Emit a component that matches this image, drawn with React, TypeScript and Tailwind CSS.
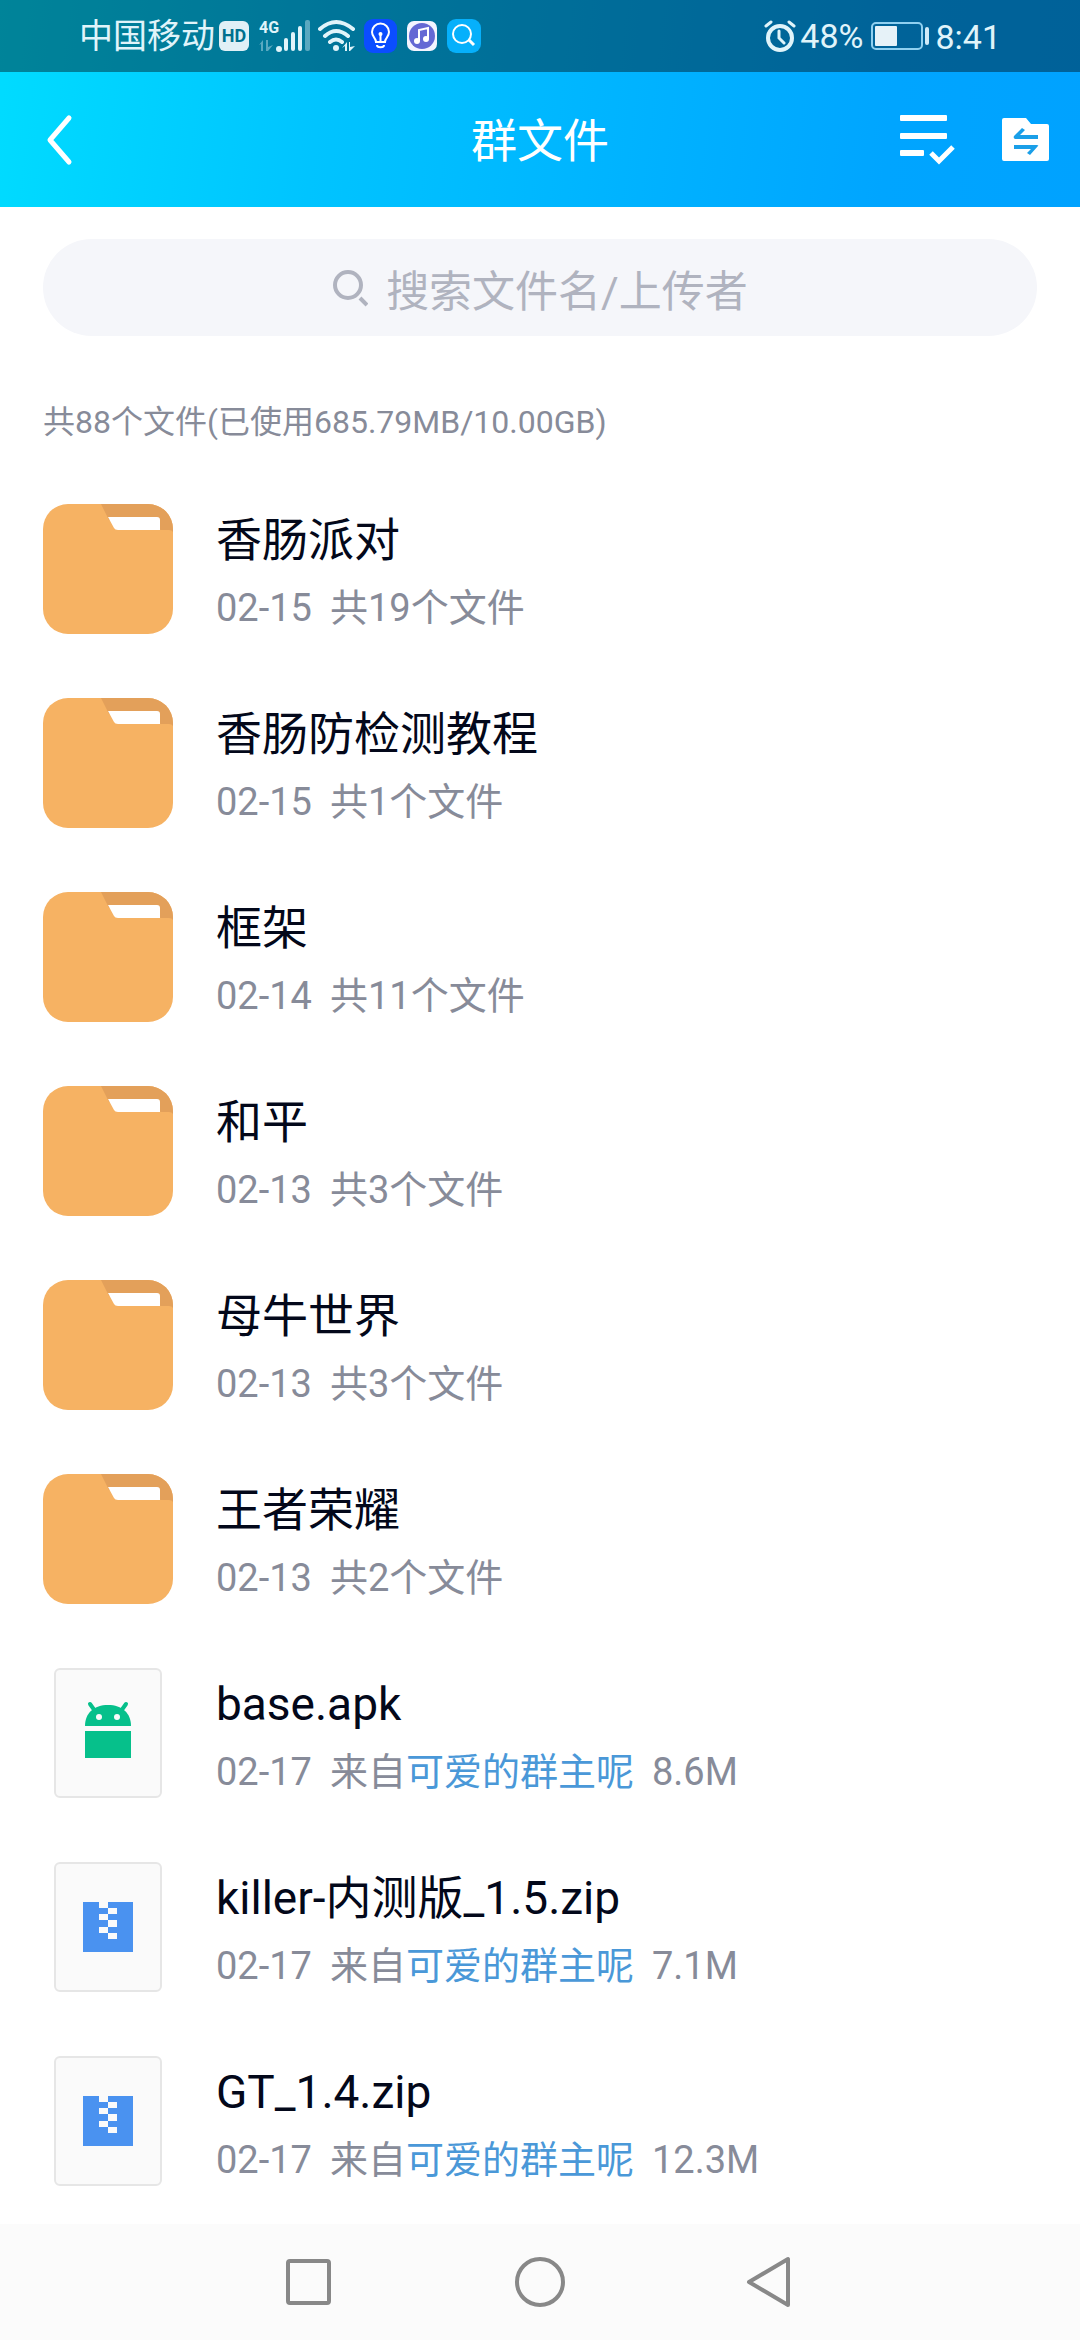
import type { ReactNode } from "react";

type Folder = { name: string; date: string; count: number };
type GroupFile = { name: string; date: string; owner: string; size: string; kind: "apk" | "zip" };

const folders: Folder[] = [
  { name: "香肠派对", date: "02-15", count: 19 },
  { name: "香肠防检测教程", date: "02-15", count: 1 },
  { name: "框架", date: "02-14", count: 11 },
  { name: "和平", date: "02-13", count: 3 },
  { name: "母牛世界", date: "02-13", count: 3 },
  { name: "王者荣耀", date: "02-13", count: 2 },
];

const files: GroupFile[] = [
  { name: "base.apk", date: "02-17", owner: "可爱的群主呢", size: "8.6M", kind: "apk" },
  { name: "killer-内测版_1.5.zip", date: "02-17", owner: "可爱的群主呢", size: "7.1M", kind: "zip" },
  { name: "GT_1.4.zip", date: "02-17", owner: "可爱的群主呢", size: "12.3M", kind: "zip" },
];

function SignalIcon() {
  return (
    <svg width="52" height="34" viewBox="0 0 52 34" fill="#e0f4fa" aria-hidden="true">
      <text x="0" y="14" fontSize="16" fontWeight="700">4G</text>
      <g opacity="0.4">
        <path d="M4 21v11H2v-7L0 26zM7 21h2v7l5-2-5 6H7z" />
        <rect x="46" y="1" width="5" height="31" rx="2" />
      </g>
      <circle cx="20" cy="30" r="3" />
      <rect x="25" y="19" width="4" height="13" rx="2" />
      <rect x="32" y="13" width="4" height="19" rx="2" />
      <rect x="39" y="7" width="4" height="25" rx="2" />
    </svg>
  );
}

function WifiIcon() {
  return (
    <svg width="38" height="34" viewBox="0 0 38 34" fill="none" stroke="#e0f4fa" strokeWidth="4" aria-hidden="true">
      <path d="M2 10Q18-4 35 10M7 17q11-10 23 0M12 23q6-5 12 0" strokeLinecap="round" />
      <circle cx="18" cy="29" r="3" fill="#e0f4fa" stroke="none" />
      <path d="M29 23v9h-2v-5l-3 2zM32 23v5l5-1-5 5h-1v-9z" fill="#e0f4fa" stroke="none" />
    </svg>
  );
}

function BulbIcon() {
  return (
    <svg width="33" height="34" viewBox="0 0 33 34" fill="none" stroke="#fff" strokeWidth="2" aria-hidden="true">
      <rect width="33" height="34" rx="9" fill="#0b4dff" stroke="none" />
      <path d="M12 23c0-4-4-5-4-10a8 8 0 0 1 17 0c0 5-4 6-4 10zM13 26c0 3 7 3 7 0M16.500 16v7" />
      <circle cx="16.500" cy="15" r="2" fill="#fff" stroke="none" />
    </svg>
  );
}

function MusicIcon() {
  return (
    <svg width="30" height="30" viewBox="0 0 30 30" aria-hidden="true">
      <rect width="30" height="30" rx="7" fill="#f4f4ff" />
      <circle cx="15" cy="15" r="13" fill="#6468d4" />
      <path d="M12 20V9l9-2v11" fill="none" stroke="#fff" strokeWidth="2" />
      <circle cx="10" cy="20" r="3" fill="#fff" />
      <circle cx="19" cy="18" r="3" fill="#fff" />
    </svg>
  );
}

function FinderIcon() {
  return (
    <svg width="34" height="34" viewBox="0 0 34 34" fill="none" stroke="#fff" strokeWidth="2" aria-hidden="true">
      <rect width="34" height="34" rx="9" fill="#06b0fb" stroke="none" />
      <circle cx="15" cy="15" r="9" />
      <path d="m22 21 5 5" strokeWidth="3" />
    </svg>
  );
}

function AlarmIcon() {
  return (
    <svg width="32" height="32" viewBox="0 0 32 32" fill="none" stroke="#e0f4fa" strokeWidth="3" strokeLinecap="round" aria-hidden="true">
      <circle cx="16" cy="18" r="12" strokeWidth="4" />
      <path d="m2 6 5-4M30 6l-5-4M15 11v7l5 5" />
    </svg>
  );
}

function BatteryIcon() {
  return (
    <svg width="60" height="28" viewBox="0 0 60 28" aria-hidden="true">
      <rect x="1" y="1" width="50" height="26" rx="4" fill="none" stroke="#8fd0f0" strokeWidth="2" />
      <rect x="4" y="4" width="22" height="20" rx="1" fill="#e6f2f8" />
      <rect x="54" y="5" width="4" height="18" rx="2" fill="#cfeaf8" />
    </svg>
  );
}

function StatusBar() {
  return (
    <div className="flex h-[72px] items-center justify-between bg-black/40 pr-[79px] pl-[79px] text-[34px] leading-[48px] text-[#e0f4fa]">
      <div className="flex items-center">
        <span>中国移动</span>
        <span className="ml-1 flex h-[30px] w-[30px] items-center justify-center rounded-md bg-[#e0f0f6] text-[18px] font-bold text-[#00708f]">
          HD
        </span>
        <span className="ml-[10px]"><SignalIcon /></span>
        <span className="ml-[7px]"><WifiIcon /></span>
        <span className="ml-2"><BulbIcon /></span>
        <span className="ml-[10px]"><MusicIcon /></span>
        <span className="ml-[10px]"><FinderIcon /></span>
      </div>
      <div className="flex items-center">
        <AlarmIcon />
        <span className="mr-2 ml-1">48%</span>
        <BatteryIcon />
        <span className="ml-1 pt-[2px]">8:41</span>
      </div>
    </div>
  );
}

function Header() {
  return (
    <header className="bg-[linear-gradient(97deg,#00dcff_0%,#00c4ff_30%,#00b2ff_60%,#00a5ff_82%,#00a2ff_100%)]">
      <StatusBar />
      <div className="grid h-[135px] grid-cols-[1fr_auto_1fr] items-center px-[30px] text-white">
        <button type="button" aria-label="返回" className="justify-self-start">
          <svg width="60" height="60" viewBox="0 0 60 60" fill="none" stroke="currentColor" strokeWidth="5" strokeLinecap="round" strokeLinejoin="round">
            <path d="M39 8 20 30l19 22" />
          </svg>
        </button>
        <h1 className="pt-[2px] text-[46px] leading-[60px]">群文件</h1>
        <div className="flex items-center gap-[46px] justify-self-end">
          <button type="button" aria-label="选择文件">
            <svg width="56" height="50" viewBox="0 0 56 50" fill="currentColor">
              <rect x="0" y="0" width="47" height="6" rx="1" />
              <rect x="0" y="18" width="47" height="6" rx="1" />
              <rect x="0" y="35" width="24" height="6" rx="1" />
              <path d="m31 38 8 8 14-14" fill="none" stroke="currentColor" strokeWidth="5" />
            </svg>
          </button>
          <button type="button" aria-label="传输列表">
            <svg width="48" height="44" viewBox="0 0 48 44">
              <path d="M2 0h22l5 6h16a2 2 0 0 1 2 2v33a2 2 0 0 1-2 2H2a2 2 0 0 1-2-2V2a2 2 0 0 1 2-2z" fill="currentColor" />
              <path d="M12 18l8-8 3 2-5 5h18v4H13q-2-1-1-3zM36 28l-8 9-3-2 4-4H12v-4h23q2 0 1 1z" fill="#1a9fe8" />
            </svg>
          </button>
        </div>
      </div>
    </header>
  );
}

function FolderIcon() {
  return (
    <svg width="130" height="130" viewBox="0 0 130 130" className="shrink-0" aria-hidden="true">
      <rect width="130" height="130" rx="25" fill="#f6b263" />
      <path d="M58 0h47a25 25 0 0 1 25 25v4l-12-3-52-10z" fill="#e3a05a" />
      <path d="M65 13h49a3 3 0 0 1 3 3v10H75q-3 0-4-2z" fill="#fff" />
      <path d="M117 26h9q3 0 4 2v2h-13z" fill="#f6b263" />
    </svg>
  );
}

function FileIcon({ kind }: { kind: GroupFile["kind"] }) {
  return (
    <span className="flex h-[130px] w-[130px] shrink-0 items-center justify-center">
      <span className="flex h-[130px] w-[108px] items-center justify-center rounded-md border-2 border-[#e6e6e6] bg-[#fafafa]">
        {kind === "apk" ? (
          <svg width="46" height="58" viewBox="0 0 46 58" fill="#06c08b" className="mb-2" aria-hidden="true">
            <path d="M0 26C0 13 9 5 23 5s23 8 23 21z" />
            <path d="m5 4 5 7M41 4l-5 7" stroke="#06c08b" strokeWidth="4" strokeLinecap="round" />
            <rect y="31" width="46" height="27" />
            <circle cx="14" cy="17" r="3" fill="#fafafa" />
            <circle cx="32" cy="17" r="3" fill="#fafafa" />
          </svg>
        ) : (
          <svg width="50" height="50" viewBox="0 0 50 50" aria-hidden="true">
            <rect width="50" height="50" fill="#4a92f0" />
            <path d="M16 0h9v6h9v6h-9v6h-9v-6h9V6h-9zM25 18h9v7h-9v6h-9v-6h9zM25 31h9v6h-9z" fill="#fafafa" />
          </svg>
        )}
      </span>
    </span>
  );
}

function Row({ icon, name, children }: { icon: ReactNode; name: string; children: ReactNode }) {
  return (
    <li className="flex items-center gap-[43px]">
      {icon}
      <div className="flex min-w-0 flex-col gap-[14px] pt-[3px]">
        <a href="#" className="text-[46px] leading-[60px] text-[#03081a]">{name}</a>
        <div className="flex gap-[18px] text-[38px] leading-[48px] text-[#878b99]">{children}</div>
      </div>
    </li>
  );
}

function NavBar() {
  return (
    <nav className="mt-auto flex h-[116px] items-center justify-center gap-[175px] bg-[#fbfbfb] text-[#888888]">
      <button type="button" aria-label="最近任务">
        <svg width="56" height="56" viewBox="0 0 56 56" fill="none" stroke="currentColor" strokeWidth="4">
          <rect x="7" y="7" width="41" height="42" rx="2" />
        </svg>
      </button>
      <button type="button" aria-label="主屏幕">
        <svg width="56" height="56" viewBox="0 0 56 56" fill="none" stroke="currentColor" strokeWidth="4">
          <circle cx="28" cy="28" r="23" />
        </svg>
      </button>
      <button type="button" aria-label="返回上一页">
        <svg width="56" height="56" viewBox="0 0 56 56" fill="none" stroke="currentColor" strokeWidth="4" strokeLinejoin="round">
          <path d="M45 5v46L6 28z" />
        </svg>
      </button>
    </nav>
  );
}

export default function App() {
  return (
    <div className="flex min-h-screen flex-col bg-white font-[Roboto,'Noto_Sans_CJK_SC',sans-serif]">
      <Header />
      <main className="px-[43px] pt-8">
        <label className="flex h-[97px] items-center justify-center gap-[18px] rounded-full bg-[#f5f6fa] text-[#b0b3bf]">
          <svg width="36" height="38" viewBox="0 0 36 38" fill="none" stroke="currentColor" strokeWidth="4" aria-hidden="true">
            <circle cx="16" cy="16" r="13" />
            <path d="m28 29 7 7" />
          </svg>
          <input
            type="text"
            aria-label="搜索文件"
            placeholder="搜索文件名/上传者"
            className="[field-sizing:content] bg-transparent text-[43px] leading-[60px] outline-none placeholder:text-[#b0b3bf]"
          />
        </label>
        <p className="mt-[62px] text-[32px] leading-[48px] text-[#878b99]">共88个文件(已使用685.79MB/10.00GB)</p>
        <ul className="mt-[58px] flex flex-col gap-16">
          {folders.map((f) => (
            <Row key={f.name} icon={<FolderIcon />} name={f.name}>
              <span>{f.date}</span>
              <span>共{f.count}个文件</span>
            </Row>
          ))}
          {files.map((f) => (
            <Row key={f.name} icon={<FileIcon kind={f.kind} />} name={f.name}>
              <span>{f.date}</span>
              <span>
                来自<a href="#" className="text-[#4a98d8]">{f.owner}</a>
              </span>
              <span>{f.size}</span>
            </Row>
          ))}
        </ul>
      </main>
      <NavBar />
    </div>
  );
}
